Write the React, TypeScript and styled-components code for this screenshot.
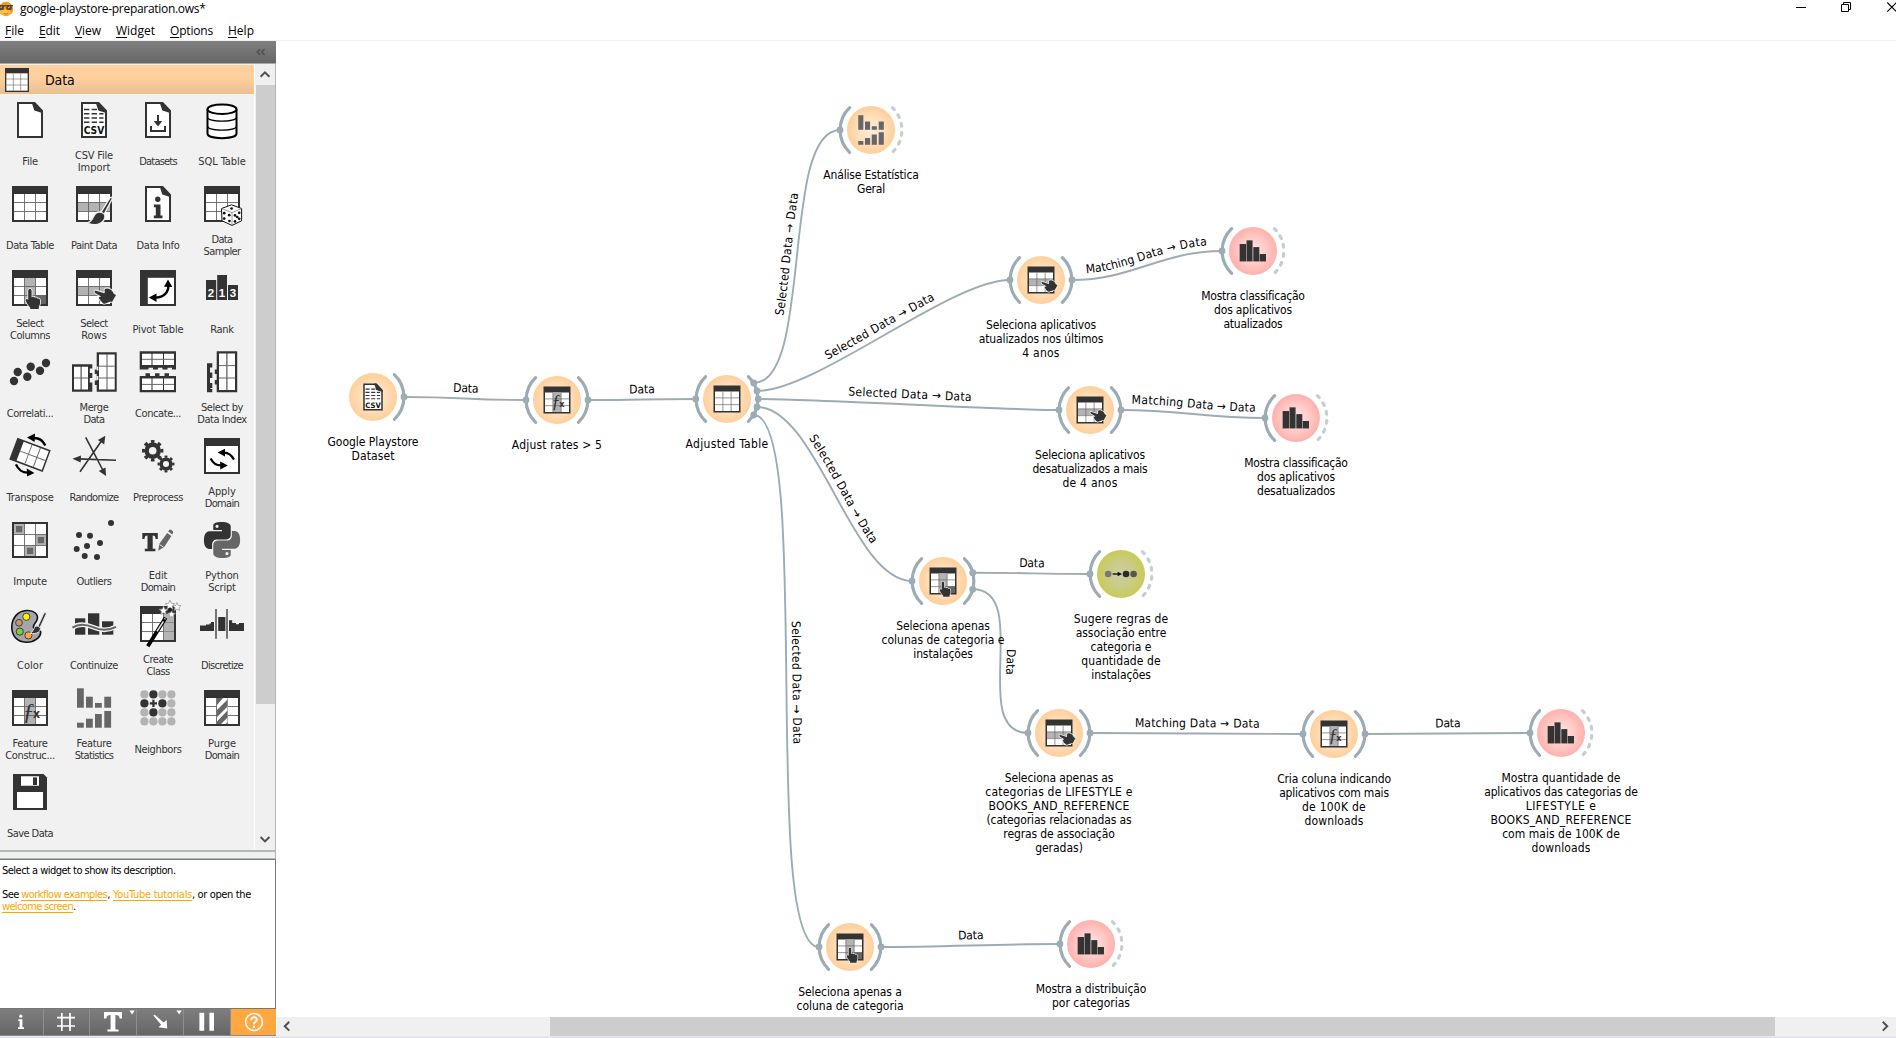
import React, { useLayoutEffect, useRef } from "react";
import styled, { createGlobalStyle } from "styled-components";

const TAHOMA = `"DejaVu Sans Condensed", "DejaVu Sans", sans-serif`;
const SEGOE = `"Open Sans", "Noto Sans", sans-serif`;
const LINK = "#9cacb4";
const INK = "#333";

const Global = createGlobalStyle`
  * { box-sizing: border-box; }
  html, body { margin: 0; padding: 0; overflow: hidden; background: #fff; }
`;

/* ---------- text fitted to a known width ---------- */

const FitSpan = styled.span`
  display: inline-block;
  white-space: pre;
`;

function Fit({ text, w, children }: { text: string; w: number; children?: React.ReactNode }) {
  const ref = useRef<HTMLSpanElement>(null);
  useLayoutEffect(() => {
    const el = ref.current;
    if (!el) return;
    el.style.letterSpacing = "0px";
    const natural = el.getBoundingClientRect().width;
    el.style.letterSpacing = `${(w + 1 - natural) / text.length}px`;
  }, [text, w]);
  return <FitSpan ref={ref}>{children ?? text}</FitSpan>;
}

/* ---------- icons, drawn on a 48 unit grid ---------- */

const grid = "#666";

const Table = ({ col, row, corner }: { col?: boolean; row?: boolean; corner?: boolean }) => (
  <g>
    <rect x="6" y="6" width="36" height="36" fill={INK} />
    <rect x="8" y="14" width="32" height="26" fill="#fff" />
    {col && <rect x="18.5" y="14" width="11" height="26" fill="#b3b3b3" />}
    {row && <rect x="8" y="22.5" width="32" height="8.5" fill="#b3b3b3" />}
    {corner && <rect x="29.5" y="31" width="10.5" height="9" fill="#666" />}
    <path d="M18.5 14V40M29.5 14V40M8 22.5H40M8 31.5H40" stroke={grid} strokeWidth=".9" fill="none" />
  </g>
);

const Page = () => (
  <g>
    <path d="M12 7H27.5L36 16V41H12Z" fill="#fff" stroke={INK} strokeWidth="2" />
    <path d="M25.5 6H29L37 14.5V17.2L28.3 14.6Z" fill={INK} />
  </g>
);

const Fn = () => (
  <g fill={INK}>
    <text x="16.5" y="34.5" fontFamily='"Liberation Serif", serif' fontStyle="italic" fontSize="24">ƒ</text>
    <text x="27" y="33.5" fontFamily='"DejaVu Sans", sans-serif' fontWeight="bold" fontSize="12" textLength="7" lengthAdjust="spacingAndGlyphs">x</text>
  </g>
);

const Hand = () => (
  <path
    d="M22.2 26.8c0-2.4 3.4-2.4 3.4 0v6.6l1-.6c1-.4 2 0 2.3.9 1-.6 2.2-.1 2.5.9 1.4-.5 2.6.3 2.6 1.7v3.2c0 1.4-.9 2.2-1.2 3.6v1.9h-8.6v-1.6c-1.6-1.2-3-3.6-4.4-6.4-.8-1.8 1-2.7 2.4-1.2z"
    fill={INK}
    stroke="#f4f4f4"
    strokeWidth="1.6"
    paintOrder="stroke"
  />
);

const PY =
  "M14.25.18l.9.2.73.26.59.3.45.32.34.34.25.34.16.33.1.3.04.26.02.2-.01.13V8.5l-.05.63-.13.55-.21.46-.26.38-.3.31-.33.25-.35.19-.35.14-.33.1-.3.07-.26.04-.21.02H8.77l-.69.05-.59.14-.5.22-.41.27-.33.32-.27.35-.2.36-.15.37-.1.35-.07.32-.04.27-.02.21v3.06H3.17l-.21-.03-.28-.07-.32-.12-.35-.18-.36-.26-.36-.36-.35-.46-.32-.59-.28-.73-.21-.88-.14-1.05-.05-1.23.06-1.22.16-1.04.24-.87.32-.71.36-.57.4-.44.42-.33.42-.24.4-.16.36-.1.32-.05.24-.01h.16l.06.01h8.16v-.83H6.18l-.01-2.75-.02-.37.05-.34.11-.31.17-.28.25-.26.31-.23.38-.2.44-.18.51-.15.58-.12.64-.1.71-.06.77-.04.84-.02 1.27.05zm-6.3 1.98l-.23.33-.08.41.08.41.23.34.33.22.41.09.41-.09.33-.22.23-.34.08-.41-.08-.41-.23-.33-.33-.22-.41-.09-.41.09z";

const star = (x: number, y: number, r: number) => {
  let d = "";
  for (let i = 0; i < 10; i++) {
    const a = -Math.PI / 2 + (i * Math.PI) / 5;
    const q = i % 2 ? r * 0.45 : r;
    d += `${i ? "L" : "M"}${(x + q * Math.cos(a)).toFixed(2)} ${(y + q * Math.sin(a)).toFixed(2)}`;
  }
  return <path key={`${x}-${y}`} d={d + "Z"} fill="#fff" stroke="#999" strokeWidth=".8" />;
};

const Gear = ({ x, y, r }: { x: number; y: number; r: number }) => (
  <g>
    <circle cx={x} cy={y} r={r * 0.57} fill="none" stroke={INK} strokeWidth={r * 0.42} />
    <circle
      cx={x}
      cy={y}
      r={r * 0.87}
      fill="none"
      stroke={INK}
      strokeWidth={r * 0.28}
      pathLength={16}
      strokeDasharray="1 1"
      strokeDashoffset=".5"
    />
  </g>
);

const bars = (list: number[][], fill: string) =>
  list.map(([x, y, w, h]) => <rect key={`${x}-${y}`} x={x} y={y} width={w} height={h} fill={fill} />);

const dots = (list: number[][], r: number, fill: string) =>
  list.map(([x, y]) => <circle key={`${x}-${y}`} cx={x} cy={y} r={r} fill={fill} />);

const ICONS: Record<string, React.ReactNode> = {
  file: <Page />,
  csv: (
    <g>
      <Page />
      <path d="M14 13.5H27M14 17.8H33.5M14 22H33.5M14 26.3H33.5" stroke={INK} strokeWidth="1.6" strokeDasharray="5.4 2.2" />
      <text x="13.7" y="38.2" fontFamily='"DejaVu Sans", sans-serif' fontWeight="bold" fontSize="10" fill="#111" textLength="20.6" lengthAdjust="spacingAndGlyphs">CSV</text>
    </g>
  ),
  datasets: (
    <g>
      <Page />
      <path d="M24 19V26M17 30V35H31V30" stroke={INK} strokeWidth="2" fill="none" />
      <path d="M19.7 25H28.3L24 30.5Z" fill={INK} />
    </g>
  ),
  sql: (
    <g stroke="#000" fill="none">
      <path d="M9.5 13.2V37.5C9.5 43.7 38.5 43.7 38.5 37.5V13.2" fill="#fff" strokeWidth="2" />
      <ellipse cx="24" cy="13.2" rx="14.5" ry="4.8" fill="#fff" strokeWidth="2" />
      <path d="M9.5 21C9.5 26.6 38.5 26.6 38.5 21M9.5 30C9.5 35.6 38.5 35.6 38.5 30" strokeWidth="1.2" />
    </g>
  ),
  table: <Table />,
  paint: (
    <g>
      <Table row />
      <path d="M40.2 17.5C42 16.5 42.6 17.6 42 19.2L34.4 33.8C36.5 39 32 45 24.5 44.6C22 44.6 18.5 43.6 17 43.2C21.5 41.5 22.5 39 23.6 36.4C25 33.4 28 31.6 31 32.2Z" fill={INK} stroke="#f1f1f1" strokeWidth="1.4" />
      <path d="M29.8 31.4L35.4 34.6" stroke="#f1f1f1" strokeWidth="1.2" />
    </g>
  ),
  info: (
    <g>
      <Page />
      <circle cx="23.8" cy="19.3" r="2.7" fill={INK} />
      <path d="M20 24.5H26.5V35.5H28.5V38.3H19.8V35.5H21.8V27.3H20Z" fill={INK} />
    </g>
  ),
  sampler: (
    <g>
      <Table />
      <path d="M23.5 28.5L33.5 24.8L43.6 28.5V40.8L34 45.4L24 40.8Z" fill="#fff" stroke="#111" strokeWidth="1" strokeLinejoin="round" />
      <path d="M23.5 28.5L34 32.6L43.6 28.5M34 32.6V45.4" stroke="#777" strokeWidth=".7" fill="none" />
      {dots([[33.6, 28.5], [26.2, 33.2], [31.2, 35.2], [26.2, 38.6], [31.4, 41], [37, 35.4], [41.2, 32.8], [39.2, 37], [37, 41.4], [41.2, 38.8]], 1.35, "#111")}
    </g>
  ),
  columns: (
    <g>
      <Table col corner />
      <Hand />
    </g>
  ),
  rows: (
    <g>
      <Table row />
      <path
        d="M25.2 26.4C23.8 28 24.8 28.6 26 29.4L31.2 32.4L29.4 33C28.2 34 29.2 35.4 30.4 35.6C29.8 36.8 31 37.8 32 37.8C32 39.4 33.8 40 35.4 39.4L40.4 37.6L42 38L46 31L43.8 29.8C42.6 26.8 40.6 24.6 37.4 24.4C34.8 24.2 33.8 26 35 28L34.2 29.2Z"
        fill={INK}
        stroke="#f4f4f4"
        strokeWidth="1.8"
        paintOrder="stroke"
      />
    </g>
  ),
  pivot: (
    <g>
      <rect x="6" y="6" width="36" height="36" fill={INK} />
      <rect x="13.8" y="13.8" width="26.2" height="26.2" fill="#fff" />
      <path d="M34.3 21C35 28 29.5 33.6 22 33.6" stroke="#000" strokeWidth="2.3" fill="none" />
      <path d="M34 15.4L38.4 23L30 22.8ZM14.8 33.5L22.5 29.4V38Z" fill="#000" />
    </g>
  ),
  rank: (
    <g>
      {bars([[8, 16, 10.2, 20], [19.2, 11, 9.8, 25], [30, 21, 10, 15]], INK)}
      <g fill="#fff" fontFamily='"Liberation Sans", sans-serif' fontWeight="bold" fontSize="11.5" textAnchor="middle">
        <text x="13" y="33">2</text>
        <text x="24" y="33">1</text>
        <text x="35" y="33">3</text>
      </g>
    </g>
  ),
  correlations: <g>{dots([[8, 33], [11.7, 24], [21.3, 28.7], [24.7, 18.7], [34, 22.7], [40, 15]], 4.2, INK)}</g>,
  merge: (
    <g>
      <path d="M2 16.3H22.3V20.5H19.8V25H22.3V30H19.8V34.5H22.3V43.7H2Z" fill={INK} />
      <path d="M4 18.8H10.6V41.5H4ZM11.6 18.8H18V41.5H11.6Z" fill="#fff" />
      <path d="M4 30H18" stroke={grid} />
      <path d="M26.7 4.3H46.7V43.7H26.7V37H24.8V32.5H26.7V26H24.8V21.5H26.7Z" fill={INK} />
      <path d="M29 6.5H36.6V41.5H29ZM37.4 6.5H44.7V41.5H37.4Z" fill="#fff" />
      <path d="M29 18.2H44.7M29 30H44.7" stroke={grid} />
      <path d="M26.7 18.5h1.6v4h-1.6zM26.7 28h1.6v4h-1.6z" fill="#f1f1f1" />
    </g>
  ),
  concat: (
    <g>
      <path d="M5.7 3.3H42V21.5H38V19.8H33.5V21.5H28.5V19.8H24V21.5H19V19.8H14.5V21.5H5.7Z" fill={INK} />
      <path d="M8 5.7H17.5V17H8ZM18.5 5.7H29V17H18.5ZM30 5.7H40V17H30Z" fill="#fff" />
      <path d="M8 11.3H40" stroke={grid} />
      <path d="M5.7 28H11.5V25.3H16V28H21V25.3H25.5V28H30.5V25.3H35V28H42V44.3H5.7Z" fill={INK} />
      <path d="M8 30.5H17.5V42H8ZM18.5 30.5H29V42H18.5ZM30 30.5H40V42H30Z" fill="#fff" />
      <path d="M8 36.4H40" stroke={grid} />
    </g>
  ),
  index: (
    <g>
      <path d="M9 15.3H14.3V19.5H12V24.5H14.3V30H12V35H14.3V40H12.5V41H14.3V44.3H9Z" fill={INK} />
      <path d="M18.7 3.3H39.2V44.3H18.7V36.5H16.8V32H18.7V26H16.8V21.5H18.7Z" fill={INK} />
      <path d="M21 5.6H28.4V42H21ZM29.4 5.6H37V42H29.4Z" fill="#fff" />
      <path d="M21 17.6H37M21 30H37" stroke={grid} />
    </g>
  ),
  transpose: (
    <g>
      <g transform="translate(24 22.8) rotate(20.5)">
        <rect x="-17.8" y="-11.6" width="35.6" height="23.2" fill={INK} />
        <rect x="-10.5" y="-10" width="26.8" height="20" fill="#fff" />
        <path d="M-1.6 -10V10M7.4 -10V10M-10.5 0H16.3" stroke={grid} strokeWidth=".9" />
      </g>
      <path d="M39.3 13.6C37 8.5 32.5 5.8 27.5 6M10 32.4C12 37.5 16.8 40.8 22 40.6" stroke="#000" strokeWidth="2.4" fill="none" />
      <path d="M21 5.6L29 1.6L28.6 10ZM28.4 41L20.8 36.6L21 44.6Z" fill="#000" />
    </g>
  ),
  randomize: (
    <g>
      <path d="M10 39.7L32 8.3M15.7 5.3L33.6 39.5M46 28.3L8 26.9" stroke={INK} strokeWidth="1.6" />
      <path d="M35.3 3.8L34.2 12.4L27.9 8ZM36 44L28.8 39L35.5 35.4ZM2.4 26.7L11 23.4L10.7 30.6Z" fill={INK} />
    </g>
  ),
  preprocess: (
    <g>
      <Gear x={18.7} y={18.7} r={10.6} />
      <Gear x={32} y={32} r={8.4} />
    </g>
  ),
  apply: (
    <g>
      <rect x="6" y="6" width="36" height="36" fill={INK} />
      <rect x="8" y="14" width="32" height="26" fill="#fff" />
      <path d="M36 27.6C33.5 23 30.3 20.6 26 20.6M12.6 26.4C15 31 18.5 33.4 22.7 33.4" stroke="#000" strokeWidth="2.2" fill="none" />
      <path d="M19.6 20.5L27 16.7V24.4ZM29.8 33.6L22.2 29.6V37.4Z" fill="#000" />
    </g>
  ),
  impute: (
    <g>
      <rect x="6" y="6" width="36" height="36" fill={INK} />
      <rect x="8" y="8" width="32" height="32" fill="#fff" />
      {bars([[8, 8, 10.5, 10.5], [29.5, 18.5, 10.5, 11], [18.5, 29.5, 11, 10.5]], "#b3b3b3")}
      <path d="M18.5 8V40M29.5 8V40M8 18.5H40M8 29.5H40" stroke={grid} strokeWidth=".9" />
      {bars([[10, 10, 6.2, 6.2], [31.8, 21, 6.2, 6.2], [21, 31.8, 6.2, 6.2]], "#666")}
    </g>
  ),
  outliers: <g>{dots([[41, 7], [9, 19], [20, 19.7], [30, 27], [17, 30], [6.7, 33], [14.7, 40], [27, 41]], 3, INK)}</g>,
  edit: (
    <g>
      <path d="M8.3 17H23.8V23H21.6C21.4 20.4 20.8 19.6 18.7 19.6V32.8H21.4V35.2H10.8V32.8H13.5V19.6C11.3 19.6 10.7 20.4 10.5 23H8.3Z" fill={INK} />
      <path d="M33.2 17L37.4 20L30.2 31L24.2 34.8L25.4 27.8ZM34.2 15.6L35.4 13.8C36.2 13 39.4 15 39.2 16.4L38.2 18.5Z" fill="#666" />
      <path d="M25.6 28.6L29.4 31" stroke="#f1f1f1" strokeWidth=".9" />
    </g>
  ),
  python: (
    <g transform="translate(6 6) scale(1.5)">
      <path d={PY} fill={INK} />
      <path d={PY} fill="#666" transform="rotate(180 12 12)" />
    </g>
  ),
  color: (
    <g>
      <path d="M20.5 10.5C28 10 33 14.5 31 20C29.6 24 26.5 24.5 27.6 28C28.6 31 33 29.5 34.6 31.5C35.4 37 28 42.6 20 42.2C10.5 41.8 5.6 35 5.8 26.8C6 17.5 12 11 20.5 10.5Z" fill="#a5a5ae" stroke="#111" strokeWidth="1.6" />
      <g stroke="#333" strokeWidth=".9">
        <circle cx="20.3" cy="16.8" r="3.6" fill="#fff200" />
        <circle cx="13" cy="22.8" r="3.4" fill="#c8966a" />
        <circle cx="13.8" cy="31.6" r="3.6" fill="#7ccc3c" />
        <circle cx="22.4" cy="35.4" r="3.6" fill="#ffa640" />
      </g>
      <path d="M38 13C39.4 12 40.6 12.8 40 14.4L34.2 27.2C35.4 31.4 31 34.6 24 33.4C27 32 27.4 29 28.6 27.4C29.6 26 31 25.8 32 26Z" fill={INK} stroke="#e8e8e8" strokeWidth="1" />
      <path d="M30.6 25.4L34.8 28" stroke="#ddd" strokeWidth="1" />
    </g>
  ),
  continuize: (
    <g>
      {bars([[5, 18.3, 10.3, 16.4], [18, 13.3, 11.3, 21.4], [32, 21.3, 11.3, 13.4]], INK)}
      <path d="M2.4 27.6C10 22.5 17 24.6 23 27.2C30 30.4 38 31 46 26.8" stroke="#f1f1f1" strokeWidth="4.6" fill="none" />
      <path d="M2.4 27.6C10 22.5 17 24.6 23 27.2C30 30.4 38 31 46 26.8" stroke="#666" strokeWidth="2" fill="none" />
    </g>
  ),
  create: (
    <g>
      <Table />
      <rect x="30" y="14" width="10" height="26" fill="#b3b3b3" />
      <path d="M30 22.5H40M30 31.5H40" stroke="#888" strokeWidth=".9" />
      {star(36, 5.2, 5)}
      {star(43, 7, 4.4)}
      {star(29.5, 10.8, 4.6)}
      {star(37.5, 14.5, 4)}
      <circle cx="36" cy="9.8" r="2" fill="#222" />
      <path d="M13.8 46.2L31.6 17.8" stroke="#000" strokeWidth="3.8" />
      <path d="M23 31.4L29.4 21.4M30.6 19.4L31.2 18.4" stroke="#ddd" strokeWidth="1.7" />
    </g>
  ),
  discretize: (
    <g>
      <path d="M2 25.4H8V24.4H11.5V23.4H13V22H16V31H2ZM20.2 17H27.4V31H20.2ZM31 20.2H34.2V23H38V24.2H41V23H46V31H31Z" fill={INK} />
      <path d="M18 9V38.8M29 9V38.8" stroke="#666" strokeWidth="1.8" />
    </g>
  ),
  feature: (
    <g>
      <Table col />
      <Fn />
    </g>
  ),
  stats: (
    <g>
      {bars([[7, 4.3, 6.8, 19.4], [16, 12.7, 6.8, 11], [25, 19, 6.8, 4.7], [34.3, 12.7, 6.8, 11], [7, 38.7, 6.8, 5], [16, 34.7, 6.8, 9], [25, 30, 6.8, 13.7], [34.3, 27, 6.8, 16.7]], "#666")}
    </g>
  ),
  neighbors: (
    <g>
      {[0, 1, 2, 3].map((r) =>
        [0, 1, 2, 3].map((c) => {
          if (r === 1 && c === 1) return null;
          const dark = (r === 0 && c === 1) || (r === 1 && (c === 0 || c === 2)) || (r === 2 && c === 1);
          return <circle key={`${r}${c}`} cx={10.4 + 9 * c} cy={10.4 + 9 * r} r="4.1" fill={dark ? INK : "#b3b3b3"} />;
        })
      )}
      <path d="M19.4 15.8V23M15.8 19.4H23" stroke={INK} strokeWidth="2.2" />
    </g>
  ),
  purge: (
    <g>
      <Table />
      <rect x="19" y="14" width="10.5" height="26" fill="#fff" />
      <path d="M19 14H25L19 21ZM29.5 15.5V22.5L19 33V26ZM29.5 26.5V33.5L23 40H19V37.5ZM29.5 38V40H27.5Z" fill="#666" />
    </g>
  ),
  save: (
    <g>
      <path d="M7 6H37.5L41 9.5V42H7Z" fill={INK} />
      <path d="M15 8.3H33V17.8H15ZM11 24H37V40H11Z" fill="#fff" />
      <rect x="27" y="9.4" width="4" height="7.6" fill={INK} />
    </g>
  ),
  dist: <g>{bars([[6.2, 14.7, 8.6, 23.2], [15.4, 9.8, 8, 28.1], [24.4, 18.8, 8, 19.1], [33, 28, 8.3, 9.9]], INK)}</g>,
  assoc: (
    <g>
      <circle cx="6.9" cy="24" r="4.4" fill="#777" />
      <circle cx="30.7" cy="24" r="4.4" fill="#2c2c2c" />
      <circle cx="40.8" cy="24" r="4.4" fill="#555" />
      <path d="M12.8 24H21" stroke="#111" strokeWidth="1.8" />
      <path d="M19.5 20.9L25.4 24L19.5 27.1Z" fill="#111" />
    </g>
  ),
};

const IconSvg = styled.svg<{ $size: number }>`
  display: block;
  flex: none;
  width: ${(p) => p.$size}px;
  height: ${(p) => p.$size}px;
  overflow: visible;
`;

const Icon = ({ name, size = 48 }: { name: string; size?: number }) => (
  <IconSvg $size={size} viewBox="0 0 48 48">
    {ICONS[name]}
  </IconSvg>
);

/* ---------- window frame ---------- */

const Window = styled.div`
  width: 1896px;
  height: 1038px;
  display: flex;
  flex-direction: column;
  background: #fff;
  color: #000;
  font-family: ${TAHOMA};
  overflow: hidden;
`;

const TitleBar = styled.div`
  height: 18px;
  display: flex;
  align-items: center;
  font: 12px/16px ${SEGOE};
`;

const Logo = styled.svg`
  width: 14px;
  height: 16px;
  margin-right: 6px;
`;

const Controls = styled.svg`
  width: 104px;
  height: 18px;
  margin-left: auto;
`;

const MenuBar = styled.div`
  height: 23px;
  padding: 0 0 0 5px;
  display: flex;
  align-items: center;
  border-bottom: 1px solid #f0f0f0;
  font: 12px/16px ${SEGOE};
`;

const MenuItem = styled.span<{ $slot: number }>`
  width: ${(p) => p.$slot}px;
  padding-top: 4px;
  & u { text-underline-offset: 2px; text-decoration-thickness: 1px; }
`;

const Body = styled.div`
  height: 995px;
  display: flex;
`;

/* ---------- tool dock ---------- */

const Dock = styled.aside`
  width: 276px;
  margin-right: 1px;
  height: 995px;
  display: flex;
  flex-direction: column;
  background: #f1f1f1;
`;

const DockHead = styled.div`
  height: 22px;
  display: flex;
  align-items: center;
  justify-content: flex-end;
  padding-right: 10px;
  background: linear-gradient(#808080, #666);
`;

const Toolbox = styled.div`
  height: 787px;
  display: flex;
  border-top: 1px solid #a4a8a8;
  border-right: 1px solid #b0b7bb;
`;

const Shelf = styled.div`
  width: 254px;
  display: flex;
  flex-direction: column;
  padding-top: 1px;
`;

const ShelfTitle = styled.div`
  height: 29px;
  display: flex;
  align-items: center;
  gap: 12px;
  padding-left: 1px;
  background: linear-gradient(#ffd19f, #ffcf9c 45%, #e8c092);
  font-size: 14px;
`;

const Tools = styled.div`
  display: grid;
  grid-template-columns: repeat(4, 64px);
  grid-auto-rows: 84px;
  margin-left: -2px;
`;

const Tool = styled.div`
  display: flex;
  flex-direction: column;
  align-items: center;
  padding-top: 2px;
`;

const ToolLabel = styled.div`
  height: 36px;
  margin-top: 1px;
  display: flex;
  flex-direction: column;
  align-items: center;
  justify-content: center;
  font-size: 11px;
  line-height: 12px;
  color: #333;
`;

const VScroll = styled.div`
  width: 21px;
  display: flex;
  flex-direction: column;
  align-items: center;
  background: #f0f0f0;
  border-left: 1px solid #fff;
`;

const ScrollArrow = styled.svg`
  width: 20px;
  height: 21px;
  flex: none;
`;

const VThumb = styled.div`
  width: 19px;
  height: 619px;
  background: #cdcdcd;
  margin-bottom: auto;
`;

const Splitter = styled.div`
  height: 9px;
  background: #f0f0f0;
  border-top: 2px solid #b3b9b9;
  border-bottom: 1px solid #b3b9b9;
  border-right: 1px solid #b0b7bb;
`;

const Help = styled.div`
  height: 149px;
  padding: 5px 2px;
  background: #fff;
  border: solid #777a7c;
  border-width: 1px 1px 0 0;
  font-size: 11px;
  line-height: 12px;
`;

const HelpLine = styled.div<{ $gap?: boolean }>`
  height: 12px;
  display: flex;
  white-space: pre;
  margin-top: ${(p) => (p.$gap ? 12 : 0)}px;
`;

const HelpLink = styled.a`
  color: #ffa500;
  & > span {
    text-decoration: underline;
    text-decoration-thickness: 1px;
    text-underline-offset: 2px;
    text-decoration-skip-ink: none;
  }
`;

const Actions = styled.div`
  height: 28px;
  display: flex;
  border-top: 1px solid #777;
  border-bottom: 1px solid #8a8a8a;
`;

const Action = styled.div<{ $w: number; $hot?: boolean }>`
  width: ${(p) => p.$w}px;
  display: flex;
  background: ${(p) => (p.$hot ? "#ffa840" : "linear-gradient(#7e7e7e, #666)")};
  border-right: ${(p) => (p.$hot ? 0 : 1)}px solid #8f8f8f;
`;

const ActionSvg = styled.svg`
  width: 46px;
  height: 26px;
  flex: none;
`;

/* ---------- canvas ---------- */

const Scene = styled.main`
  width: 1619px;
  display: flex;
  flex-direction: column;
`;

const Canvas = styled.div`
  position: relative;
  height: 976px;
  background: #fff;
  overflow: hidden;
`;

const Links = styled.svg`
  position: absolute;
  left: 0;
  top: 0;
  width: 1619px;
  height: 976px;
  text { font: 12px ${TAHOMA}; fill: #000; }
`;

const FILL: Record<string, string> = {
  data: "radial-gradient(closest-side, #ffeddb 0%, #ffe2c2 45%, #ffcf9b 100%)",
  viz: "radial-gradient(closest-side, #ffe6e4 0%, #ffd0cd 45%, #ffb1ad 100%)",
  assoc: "radial-gradient(closest-side, #cbcda4 0%, #cacc8c 45%, #c8cb58 100%)",
};

const Node = styled.div<{ $x: number; $y: number }>`
  position: absolute;
  left: ${(p) => p.$x - 277 - 90}px;
  top: ${(p) => p.$y - 41 - 24}px;
  width: 180px;
  display: flex;
  flex-direction: column;
  align-items: center;
`;

const Disc = styled.div<{ $kind: string }>`
  width: 48px;
  height: 48px;
  border-radius: 50%;
  display: flex;
  align-items: center;
  justify-content: center;
  background: ${(p) => FILL[p.$kind]};
`;

const Caption = styled.div`
  margin-top: 14px;
  display: flex;
  flex-direction: column;
  align-items: center;
  font-size: 12px;
  line-height: 14px;
`;

const HScroll = styled.div`
  height: 19px;
  display: flex;
  background: #f0f0f0;
`;

const HThumb = styled.div`
  width: 1225px;
  height: 19px;
  margin: 0 auto 0 252px;
  background: #cdcdcd;
`;

const HArrow = styled.svg`
  width: 21px;
  height: 19px;
`;

const Footer = styled.div`
  height: 2px;
  background: #dcdbe8;
  border-top: 1px solid #ececf0;
`;

/* ---------- content ---------- */

type Line = [string, number];

const TOOLS: { icon: string; lines: Line[] }[] = [
  { icon: "file", lines: [["File", 14.5]] },
  { icon: "csv", lines: [["CSV File", 37], ["Import", 31.5]] },
  { icon: "datasets", lines: [["Datasets", 36.5]] },
  { icon: "sql", lines: [["SQL Table", 46.5]] },
  { icon: "table", lines: [["Data Table", 47]] },
  { icon: "paint", lines: [["Paint Data", 45]] },
  { icon: "info", lines: [["Data Info", 42]] },
  { icon: "sampler", lines: [["Data", 20], ["Sampler", 36]] },
  { icon: "columns", lines: [["Select", 26.5], ["Columns", 39]] },
  { icon: "rows", lines: [["Select", 26.5], ["Rows", 24.5]] },
  { icon: "pivot", lines: [["Pivot Table", 50]] },
  { icon: "rank", lines: [["Rank", 22.5]] },
  { icon: "correlations", lines: [["Correlati...", 45.5]] },
  { icon: "merge", lines: [["Merge", 28], ["Data", 20]] },
  { icon: "concat", lines: [["Concate...", 45]] },
  { icon: "index", lines: [["Select by", 41], ["Data Index", 48.5]] },
  { icon: "transpose", lines: [["Transpose", 46]] },
  { icon: "randomize", lines: [["Randomize", 48]] },
  { icon: "preprocess", lines: [["Preprocess", 49]] },
  { icon: "apply", lines: [["Apply", 26.5], ["Domain", 33.5]] },
  { icon: "impute", lines: [["Impute", 32.5]] },
  { icon: "outliers", lines: [["Outliers", 34]] },
  { icon: "edit", lines: [["Edit", 17.5], ["Domain", 33.5]] },
  { icon: "python", lines: [["Python", 32.5], ["Script", 26.5]] },
  { icon: "color", lines: [["Color", 25]] },
  { icon: "continuize", lines: [["Continuize", 47]] },
  { icon: "create", lines: [["Create", 29], ["Class", 22]] },
  { icon: "discretize", lines: [["Discretize", 41]] },
  { icon: "feature", lines: [["Feature", 34], ["Construc...", 48.5]] },
  { icon: "stats", lines: [["Feature", 34], ["Statistics", 37.5]] },
  { icon: "neighbors", lines: [["Neighbors", 46]] },
  { icon: "purge", lines: [["Purge", 27], ["Domain", 33.5]] },
  { icon: "save", lines: [["Save Data", 45]] },
];

const MENU: [string, number, number][] = [
  ["File", 18, 34],
  ["Edit", 20, 36],
  ["View", 25, 41],
  ["Widget", 38, 54],
  ["Options", 42, 58],
  ["Help", 25, 40],
];

interface NodeDef {
  x: number;
  y: number;
  icon: string;
  kind: string;
  left: boolean;
  right: "solid" | "dashed";
  lines: Line[];
}

const n = (x: number, y: number, icon: string, kind: string, lines: Line[], left = true): NodeDef => ({
  x, y, icon, kind, lines, left, right: kind === "data" && icon !== "stats" ? "solid" : "dashed",
});

const NODES: NodeDef[] = [
  n(373, 397, "csv", "data", [["Google Playstore", 90], ["Dataset", 42]], false),
  n(557, 400, "feature", "data", [["Adjust rates > 5", 89.3]]),
  n(727, 399, "table", "data", [["Adjusted Table", 82]]),
  n(871, 130, "stats", "data", [["Análise Estatística", 94.3], ["Geral", 27]]),
  n(1041, 280, "rows", "data", [["Seleciona aplicativos", 109], ["atualizados nos últimos", 123.6], ["4 anos", 36.4]]),
  n(1253, 251, "dist", "viz", [["Mostra classificação", 102.4], ["dos aplicativos", 77], ["atualizados", 58]]),
  n(1090, 410, "rows", "data", [["Seleciona aplicativos", 109], ["desatualizados a mais", 114], ["de 4 anos", 54]]),
  n(1296, 418, "dist", "viz", [["Mostra classificação", 102.4], ["dos aplicativos", 77], ["desatualizados", 77]]),
  n(943, 581, "columns", "data", [["Seleciona apenas", 92.7], ["colunas de categoria e", 122], ["instalações", 58.5]]),
  n(1121, 574, "assoc", "assoc", [["Sugere regras de", 93.3], ["associação entre", 89.7], ["categoria e", 60], ["quantidade de", 78.3], ["instalações", 58.5]]),
  n(1059, 733, "rows", "data", [["Seleciona apenas as", 107.7], ["categorias de LIFESTYLE e", 146.3], ["BOOKS_AND_REFERENCE", 140], ["(categorias relacionadas as", 144], ["regras de associação", 110.3], ["geradas)", 46.7]]),
  n(1334, 734, "feature", "data", [["Cria coluna indicando", 112.7], ["aplicativos com mais", 108.7], ["de 100K de", 63], ["downloads", 58]]),
  n(1561, 733, "dist", "viz", [["Mostra quantidade de", 118], ["aplicativos das categorias de", 152.7], ["LIFESTYLE e", 69.7], ["BOOKS_AND_REFERENCE", 140], ["com mais de 100K de", 116.7], ["downloads", 58]]),
  n(850, 947, "columns", "data", [["Seleciona apenas a", 102.7], ["coluna de categoria", 106]]),
  n(1091, 944, "dist", "viz", [["Mostra a distribuição", 109.3], ["por categorias", 77]]),
];

const SEL = "Selected Data → Data";
const MATCH = "Matching Data → Data";

const EDGES: [number, number, number, number, string][] = [
  [404, 397, 526, 400, "Data"],
  [588, 400, 695.7, 399, "Data"],
  [753.7, 383, 840, 130, SEL],
  [757, 391, 1010, 280, SEL],
  [758.2, 399, 1059, 410, SEL],
  [757, 407, 912, 581, SEL],
  [753.7, 415, 819, 947, SEL],
  [1072, 280, 1222, 251, MATCH],
  [1121, 410, 1265, 418, MATCH],
  [972.7, 572.7, 1090, 574, "Data"],
  [972.7, 589.3, 1028, 733, "Data"],
  [1090, 733, 1303, 734, MATCH],
  [1365, 734, 1530, 733, "Data"],
  [881, 947, 1060, 944, "Data"],
];

const TEXT_W: Record<string, number> = { Data: 25.5, [SEL]: 123, [MATCH]: 124.5 };

const curve = (x1: number, y1: number, x2: number, y2: number) => {
  const c = Math.min(Math.hypot(x2 - x1, y2 - y1) / 2, 60);
  return `M${x1} ${y1}C${x1 + c} ${y1} ${x2 - c} ${y2} ${x2} ${y2}`;
};

const LinkLayer = () => (
  <Links viewBox="277 41 1619 976">
    {EDGES.map(([x1, y1, x2, y2], i) => (
      <g key={i}>
        <path id={`edge${i}`} d={curve(x1, y1, x2, y2)} stroke={LINK} strokeWidth="1.9" fill="none" />
        <circle cx={x1} cy={y1} r="3.4" fill={LINK} />
        <circle cx={x2} cy={y2} r="3.4" fill={LINK} />
      </g>
    ))}
    {NODES.map(({ x, y, left, right }, i) => (
      <g key={i} fill="none" strokeWidth="3.2" strokeLinecap="round" stroke={LINK}>
        {left && <path d={`M${x - 21.4} ${y - 22.3}A31 31 0 0 0 ${x - 21.4} ${y + 22.3}`} />}
        <path
          d={`M${x + 21.4} ${y - 22.3}A31 31 0 0 1 ${x + 21.4} ${y + 22.3}`}
          stroke={right === "dashed" ? "#c6ced2" : LINK}
          strokeDasharray={right === "dashed" ? "2.8 6.3" : undefined}
        />
      </g>
    ))}
    {EDGES.map(([, , , , label], i) => (
      <text key={i} dy="-6.2" textAnchor="middle" textLength={TEXT_W[label]}>
        <textPath href={`#edge${i}`} startOffset="50.3%" textLength={TEXT_W[label]}>
          {label}
        </textPath>
      </text>
    ))}
  </Links>
);

export default function App() {
  return (
    <Window>
      <Global />
      <TitleBar>
        <Logo viewBox="0 0 14 16">
          <circle cx="6" cy="8" r="7.2" fill="#f79a1c" />
          <ellipse cx="5" cy="11.5" rx="5.5" ry="2.8" fill="#ffc04a" />
          <path d="M-1 4.8H13" stroke="#333" strokeWidth="1.2" />
          <rect x="-1" y="4.6" width="5" height="4.4" rx="1.6" fill="#5a4632" />
          <rect x="6.4" y="4.6" width="5.4" height="4.4" rx="1.6" fill="#5a4632" />
          <path d="M0.4 6.6l1.6-.9M8 7l1.8-1" stroke="#ddd" strokeWidth=".9" />
          <path d="M3.5 12.5Q6 13.6 8.4 12.4" stroke="#b35f00" strokeWidth=".8" fill="none" />
        </Logo>
        <Fit text="google-playstore-preparation.ows*" w={184.5} />
        <Controls viewBox="1792 0 104 18">
          <path d="M1796 7.5H1806M1841.5 4.5H1848.5V11.5H1841.5ZM1843.5 4.5V2.5H1850.5V9.5H1848.5" stroke="#000" fill="none" />
          <path d="M1887.3 2.5L1896.5 11.7M1896.5 2.5L1887.3 11.7" stroke="#000" strokeWidth="1.1" />
        </Controls>
      </TitleBar>
      <MenuBar>
        {MENU.map(([label, w, slot]) => (
          <MenuItem key={label} $slot={slot}>
            <Fit text={label} w={w}>
              <u>{label[0]}</u>
              {label.slice(1)}
            </Fit>
          </MenuItem>
        ))}
      </MenuBar>
      <Body>
        <Dock>
          <DockHead>
            <svg width="10" height="8" viewBox="0 0 10 8">
              <path d="M4.2 1L1.2 4L4.2 7M8.6 1L5.6 4L8.6 7" stroke="#4a4a4a" strokeWidth="1.3" fill="none" />
            </svg>
          </DockHead>
          <Toolbox>
            <Shelf>
              <ShelfTitle>
                <Icon name="table" size={32} />
                <Fit text="Data" w={28.5} />
              </ShelfTitle>
              <Tools>
                {TOOLS.map(({ icon, lines }) => (
                  <Tool key={icon}>
                    <Icon name={icon} />
                    <ToolLabel>
                      {lines.map(([t, w]) => (
                        <Fit key={t} text={t} w={w} />
                      ))}
                    </ToolLabel>
                  </Tool>
                ))}
              </Tools>
            </Shelf>
            <VScroll>
              <ScrollArrow viewBox="0 0 20 21">
                <path d="M5.6 12.8L10 8.4L14.4 12.8" stroke="#505050" strokeWidth="2" fill="none" />
              </ScrollArrow>
              <VThumb />
              <ScrollArrow viewBox="0 0 20 21">
                <path d="M5.6 8L10 12.4L14.4 8" stroke="#505050" strokeWidth="2" fill="none" />
              </ScrollArrow>
            </VScroll>
          </Toolbox>
          <Splitter />
          <Help>
            <HelpLine>
              <Fit text="Select a widget to show its description." w={172.5} />
            </HelpLine>
            <HelpLine $gap>
              <Fit text="See " w={18.2} />
              <HelpLink>
                <Fit text="workflow examples" w={85} />
              </HelpLink>
              <Fit text=", " w={4.8} />
              <HelpLink>
                <Fit text="YouTube tutorials" w={78} />
              </HelpLink>
              <Fit text=", or open the" w={58} />
            </HelpLine>
            <HelpLine>
              <HelpLink>
                <Fit text="welcome screen" w={70} />
              </HelpLink>
              .
            </HelpLine>
          </Help>
          <Actions>
            <Action $w={44}>
              <ActionSvg viewBox="0 0 46 26">
                <path d="M18.3 10.2H22.4V18.2H24V20H18V18.2H19.6V12H18.3Z" fill="#fff" />
                <circle cx="20.8" cy="7.2" r="1.6" fill="#fff" />
              </ActionSvg>
            </Action>
            <Action $w={46}>
              <ActionSvg viewBox="0 0 46 26">
                <path d="M17.8 4V22M26 4V22M13 8.7H31M13 17H31" stroke="#fff" strokeWidth="1.7" />
              </ActionSvg>
            </Action>
            <Action $w={47}>
              <ActionSvg viewBox="0 0 46 26">
                <path d="M14 3H32V9.4H29.6C29.4 6.8 28.6 6 25.4 6V20.4H28.6V22.6H17.4V20.4H20.6V6C17.4 6 16.6 6.8 16.4 9.4H14Z" fill="#fff" />
                <path d="M39.4 1.6H44.8L42.1 5.6Z" fill="#fff" />
              </ActionSvg>
            </Action>
            <Action $w={47}>
              <ActionSvg viewBox="0 0 46 26">
                <path d="M16.3 6.5L17.8 5.8L26.6 13.4L29.6 11L30.2 19.6L21.4 18.2L24.2 15.8Z" fill="#fff" />
                <path d="M39.4 1.6H44.8L42.1 5.6Z" fill="#fff" />
              </ActionSvg>
            </Action>
            <Action $w={47}>
              <ActionSvg viewBox="0 0 46 26">
                <path d="M15.4 3.8H20.2V21.8H15.4ZM25.4 3.8H30V21.8H25.4Z" fill="#fff" />
              </ActionSvg>
            </Action>
            <Action $w={45} $hot>
              <ActionSvg viewBox="0 0 46 26">
                <circle cx="23" cy="13" r="8.4" fill="none" stroke="#fff" strokeWidth="1.5" />
                <path d="M20.2 11.2C20 7.2 26 7.4 25.8 10.8C25.7 12.8 23 12.8 23 15.2" stroke="#fff" strokeWidth="1.9" fill="none" />
                <circle cx="23" cy="17.8" r="1.2" fill="#fff" />
              </ActionSvg>
            </Action>
          </Actions>
        </Dock>
        <Scene>
          <Canvas>
            <LinkLayer />
            {NODES.map(({ x, y, icon, kind, lines }, i) => (
              <Node key={i} $x={x} $y={y}>
                <Disc $kind={kind}>
                  <Icon name={icon} size={36} />
                </Disc>
                <Caption>
                  {lines.map(([t, w]) => (
                    <Fit key={t} text={t} w={w} />
                  ))}
                </Caption>
              </Node>
            ))}
          </Canvas>
          <HScroll>
            <HArrow viewBox="0 0 21 19">
              <path d="M12.2 4.8L7.8 9.2L12.2 13.6" stroke="#505050" strokeWidth="2" fill="none" />
            </HArrow>
            <HThumb />
            <HArrow viewBox="0 0 21 19">
              <path d="M7.8 4.8L12.2 9.2L7.8 13.6" stroke="#505050" strokeWidth="2" fill="none" />
            </HArrow>
          </HScroll>
        </Scene>
      </Body>
      <Footer />
    </Window>
  );
}
